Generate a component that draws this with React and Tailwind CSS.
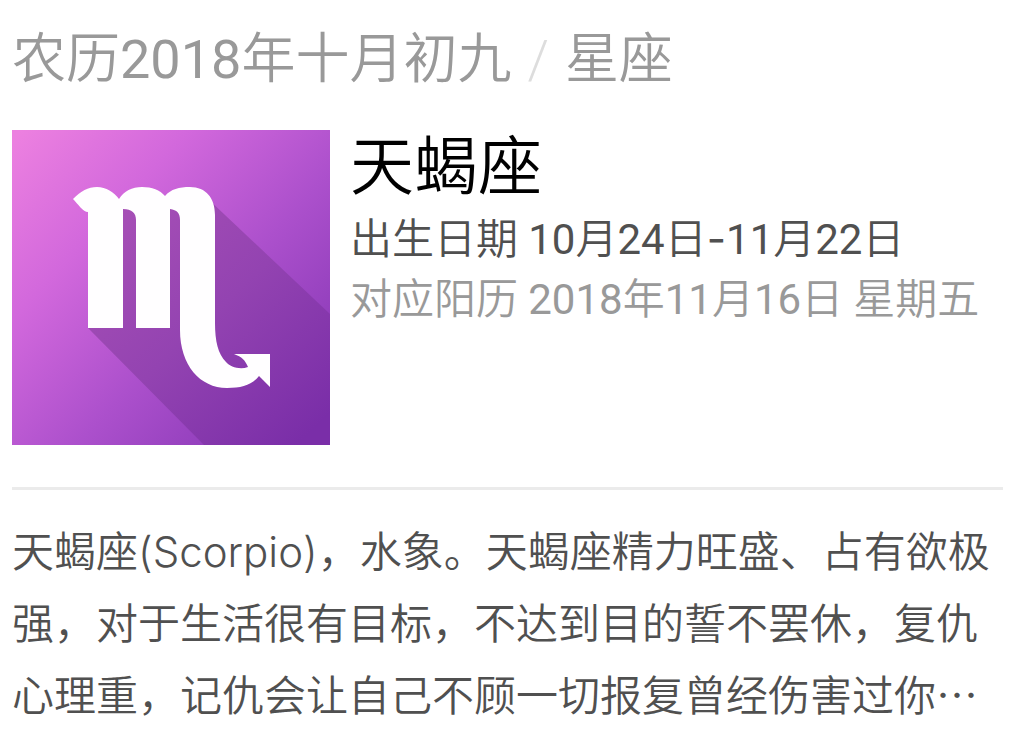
import React from 'react';

const sign = {
  name: '天蝎座',
  latin: '(Scorpio)',
  birthday: '10月24日-11月22日',
  solar: '2018年11月16日 星期五',
  intro:
    '，水象。天蝎座精力旺盛、占有欲极强，对于生活很有目标，不达到目的誓不罢休，复仇心理重，记仇会让自己不顾一切报复曾经伤害过你…',
};

const ScorpioIcon = () => (
  <svg viewBox="0 0 318 315" className="block w-full" preserveAspectRatio="none" role="img" aria-label="天蝎座">
    <defs>
      <linearGradient id="bg" gradientUnits="userSpaceOnUse" x1="0" y1="10" x2="300" y2="290">
        <stop offset="0" stopColor="#ec80e0" />
        <stop offset="0.3" stopColor="#d268dc" />
        <stop offset="0.62" stopColor="#ac50cc" />
        <stop offset="1" stopColor="#8436b4" />
      </linearGradient>
      <linearGradient id="shade" gradientUnits="userSpaceOnUse" x1="90" y1="80" x2="300" y2="300">
        <stop offset="0" stopColor="#a850b6" />
        <stop offset="0.5" stopColor="#9343b1" />
        <stop offset="1" stopColor="#7a2ea8" />
      </linearGradient>
    </defs>
    <rect width="318" height="315" fill="url(#bg)" />
    <path d="M195 68L318 184V315H192L76 198L110 70Z" fill="url(#shade)" />
    <path
      d="M61 69C69 61 76 57 85 57C94 57 102 62 107 69C112 61 120 57 130 57C140 57 148 60 153 66C159 59 167 57 178 57C194 57 203 68 203 85V193C203 211 206 224 214 232C218 237 228 240 236 237C233 230 230 227 222 224H258V257L247 246C240 255 230 258 215 258C188 258 168 235 168 200V90C168 83 165 80 158 79V198H124V90C124 83 120 79 111 79V198H76V82C71 82 66 74 61 69Z"
      fill="#fffeff"
    />
  </svg>
);

// digits are set a step heavier than the characters around them
const DateText = ({ children }) =>
  children.split(/(\d+|-)/).map((part, i) => {
    if (part === '-') {
      return (
        <span key={i} className="font-['Inter',sans-serif] leading-none font-normal">
          -
        </span>
      );
    }
    return /^\d+$/.test(part) ? (
      <span key={i} className="font-normal">
        {part}
      </span>
    ) : (
      part
    );
  });

export default function App() {
  return (
    <main
      lang="zh-CN"
      className="bg-white pt-[26px] pr-2 pl-3 font-['Roboto','Noto_Sans_CJK_SC',sans-serif] font-[350] text-[#505050]"
    >
      <h1 className="text-[54px] leading-[68px] text-[#999]">
        <DateText>农历2018年十月初九</DateText>
        <span className="mx-4 text-[#ddd]">/</span>星座
      </h1>

      <section className="mt-9 flex items-start gap-5 border-b-3 border-[#ebebeb] pb-[42px]">
        <div className="w-[318px] shrink-0">
          <ScorpioIcon />
        </div>
        <div className="min-w-0 grow">
          <h2 className="text-[64px] leading-[76px] text-black">{sign.name}</h2>
          <p className="mt-1 text-[42px] leading-[60px]">
            出生日期 <DateText>{sign.birthday}</DateText>
          </p>
          <p className="text-[42px] leading-[60px] text-[#999]">
            对应阳历 <DateText>{sign.solar}</DateText>
          </p>
        </div>
      </section>

      <p className="mt-[23px] font-['Noto_Sans_CJK_SC',sans-serif] text-[42px] leading-[72px]">
        {sign.name}
        <span className="font-['Inter',sans-serif] leading-none">{sign.latin}</span>
        {sign.intro}
      </p>
    </main>
  );
}
